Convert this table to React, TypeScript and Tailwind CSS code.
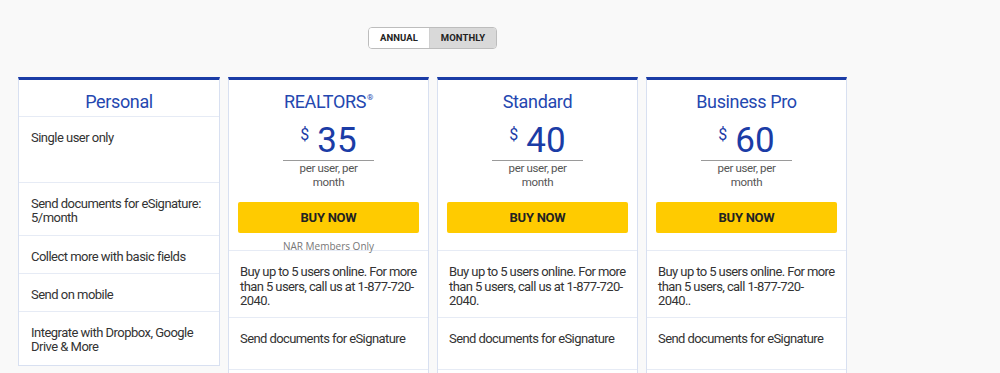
import { useState, type ReactNode } from "react";

interface Plan {
  name: string;
  reg?: boolean;
  price: string;
  note?: string;
  rows: ReactNode[];
}

const plans: Plan[] = [
  {
    name: "REALTORS",
    reg: true,
    price: "35",
    note: "NAR Members Only",
    rows: [
      "Buy up to 5 users online. For more than 5 users, call us at 1-877-720-2040.",
      "Send documents for eSignature",
      "",
    ],
  },
  {
    name: "Standard",
    price: "40",
    rows: [
      "Buy up to 5 users online. For more than 5 users, call us at 1-877-720-2040.",
      "Send documents for eSignature",
      "",
    ],
  },
  {
    name: "Business Pro",
    price: "60",
    rows: [
      <>
        Buy up to 5 users online. For more than 5 users, call 1-877-720-
        <br />
        2040..
      </>,
      "Send documents for eSignature",
      "",
    ],
  },
];

const personalRows = [
  { text: "Single user only", h: "h-[66px]" },
  { text: "Send documents for eSignature: 5/month", h: "h-[53px]" },
  { text: "Collect more with basic fields", h: "h-[38px]" },
  { text: "Send on mobile", h: "h-[38px]" },
  { text: "Integrate with Dropbox, Google Drive & More", h: "h-[53px]" },
];

const paidRowHeights = ["h-[67px]", "h-[52px]", "h-[60px]"];

export default function App() {
  const [billing, setBilling] = useState<"annual" | "monthly">("monthly");

  return (
    <div className="min-h-screen bg-[#f9f9f9] font-['Roboto',sans-serif] text-[#333] overflow-hidden">
      <div className="w-[829px] ml-[18px] pt-[27px]">
        <div className="flex justify-center">
          <div className="flex h-[22px] rounded-[4px] border border-[#bdbdbd] overflow-hidden text-[9.5px] font-bold tracking-[0.01em] text-[#222]">
            <button
              onClick={() => setBilling("annual")}
              className={`w-[60px] ${billing === "annual" ? "bg-[#d9d9d9]" : "bg-white"}`}
            >
              ANNUAL
            </button>
            <button
              onClick={() => setBilling("monthly")}
              className={`w-[67px] border-l border-[#d0d0d0] ${billing === "monthly" ? "bg-[#d9d9d9]" : "bg-white"}`}
            >
              MONTHLY
            </button>
          </div>
        </div>

        <div className="flex items-start gap-[8px] mt-[28px]">
          {/* Personal */}
          <div className="w-[202px] shrink-0 bg-white border border-[#d8e0f1] border-t-[3px] border-t-[#1b3ca6]">
            <div className="h-[37px] pt-[10px] border-b border-[#e6ebf5] text-center text-[18px] leading-[24px] tracking-[-0.02em] text-[#2447b0]">
              Personal
            </div>
            {personalRows.map((r, i) => (
              <div
                key={r.text}
                className={`${r.h} px-[12px] pt-[14px] text-[13px] leading-[14px] tracking-[-0.04em] ${i < personalRows.length - 1 ? "border-b border-[#e6ebf5]" : ""}`}
              >
                {r.text}
              </div>
            ))}
          </div>

          {plans.map((p) => (
            <div
              key={p.name}
              className="w-[201px] shrink-0 bg-white border border-[#d8e0f1] border-t-[3px] border-t-[#1b3ca6]"
            >
              <div className="h-[171px] pt-[10px] border-b border-[#e6ebf5] flex flex-col items-center">
                <div className="h-[24px] shrink-0 text-[18px] leading-[24px] tracking-[-0.02em] text-[#2447b0]">
                  {p.name}
                  {p.reg && <span className="relative -top-[8px] text-[8px] leading-none ml-[1px]">®</span>}
                </div>
                <div className="w-[91px] h-[47px] shrink-0 border-b border-[#9a9a9a] flex justify-center items-start pt-[10px] text-[#1b3ca6]">
                  <span className="text-[16px] leading-[16px] mt-[3px] mr-[8px]">$</span>
                  <span className="text-[35px] leading-[34px]">{p.price}</span>
                </div>
                <div className="shrink-0 text-[11.5px] leading-[14px] text-[#555] text-center w-[91px] tracking-[-0.03em]">
                  per user, per month
                </div>
                <button className="shrink-0 mt-[13px] w-[181px] h-[31px] bg-[#ffcb00] rounded-[2px] text-[13px] font-bold text-[#222] tracking-[-0.02em]">
                  BUY NOW
                </button>
                {p.note && (
                  <div className="shrink-0 mt-[8px] font-['Open_Sans',sans-serif] text-[10px] leading-[11px] text-[#777]">
                    {p.note}
                  </div>
                )}
              </div>
              {p.rows.map((r, i) => (
                <div
                  key={i}
                  className={`${paidRowHeights[i]} px-[11px] pt-[14px] text-[13px] leading-[14.5px] tracking-[-0.045em] border-b border-[#e6ebf5]`}
                >
                  {r}
                </div>
              ))}
            </div>
          ))}
        </div>
      </div>
    </div>
  );
}
